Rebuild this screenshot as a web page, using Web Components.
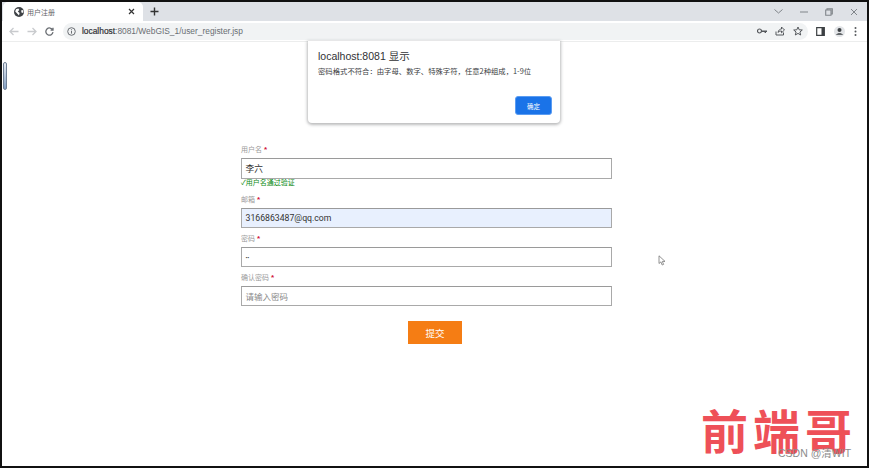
<!DOCTYPE html>
<html lang="zh"><head><meta charset="utf-8"><title>用户注册</title>
<style>
html,body{margin:0;padding:0;background:#fff}
body{font-family:"Liberation Sans","Noto Sans CJK SC",sans-serif;width:869px;height:468px;overflow:hidden}
</style></head><body>
<browser-window>
  <register-form></register-form>
</browser-window>
<script>
const CJK='"Noto Sans CJK SC",sans-serif';
const ic=(w,h,b,s)=>`<svg width="${w}" height="${h}" viewBox="${b}" fill="none" stroke="currentColor" stroke-width="1.3" aria-hidden="true">${s}</svg>`;

customElements.define('browser-tabs',class extends HTMLElement{constructor(){super();this.attachShadow({mode:'open'}).innerHTML=`<style>
:host{display:flex;height:19px;background:#dee1e6;align-items:stretch;color:#45484d}
.tab{width:140px;margin-left:1px;background:#fff;display:flex;align-items:center;box-sizing:border-box;padding:0 8px 0 11px;border-radius:5px 5px 0 0}
.t{font:7px ${CJK};color:#5f6368;margin-left:3px;flex:1}
.x{display:flex;color:#333}
.plus{display:flex;margin-left:7px;align-items:center;color:#333}
.sp{flex:1}
.ctl{display:flex;align-items:center;color:#80858a;gap:17px;padding-right:9px}
</style>
<div class="tab"><svg width="10" height="10" viewBox="0 0 10 10" aria-hidden="true"><circle cx="5" cy="5" r="5" fill="#3f4347"/><path d="M2 2.2 4.4 1.4 5.3 3 3.8 4.6 5.6 6 5 8.6 3.6 7 1.2 4.6ZM7 3.4 9.2 3 9.4 5.4 7.8 6Z" fill="#fff"/></svg><span class="t">用户注册</span><span class="x">${ic(7,7,'0 0 7 7','<path d="M1 1 6 6M6 1 1 6" stroke-width="1.2"/>')}</span></div>
<div class="plus">${ic(9,9,'0 0 9 9','<path d="M4.5 .5v8M.5 4.5h8" stroke-width="1.4"/>')}</div>
<div class="sp"></div>
<div class="ctl">${ic(9,5,'0 0 9 5','<path d="M.5.5 4.5 4 8.5.5" stroke-width="1"/>')}${ic(8,8,'0 0 8 8','<path d="M0 4h8" stroke-width="1"/>')}${ic(8,8,'0 0 8 8','<path d="M.7 2h5.3v5.3H.7zM2 2V.7h5.3V6H6" stroke-width="1.1"/>')}${ic(8,8,'0 0 8 8','<path d="M1 1 7 7M7 1 1 7" stroke-width="1"/>')}</div>`}});

customElements.define('browser-toolbar',class extends HTMLElement{constructor(){super();this.attachShadow({mode:'open'}).innerHTML=`<style>
:host{display:flex;height:21px;background:#fff;align-items:center;box-sizing:border-box;border-bottom:1px solid #eceded;color:#6a6e73}
.nav{display:flex;align-items:center;gap:8px;padding-left:7px;width:54px;box-sizing:border-box}
.off{color:#c9cbce}
.omni{flex:1;height:17px;background:#f1f3f4;border-radius:9px;margin-left:7px;display:flex;align-items:center;padding:0 5px 0 4px;box-sizing:border-box}
.u{font:8.4px "Liberation Sans",sans-serif;color:#6a6e73;margin-left:6px;flex:1}
.u b{color:#303134;font-weight:400;-webkit-text-stroke:.2px #303134}
.r{display:flex;align-items:center;gap:8px;color:#55585c}
.ext{display:flex;align-items:center;gap:9px;padding:0 10px 0 8px}
</style>
<div class="nav"><span class="off" style="display:flex">${ic(10,9,'0 0 10 9','<path d="M9.5 4.5H1M4.5 1 1 4.5 4.5 8"/>')}</span><span class="off" style="display:flex">${ic(10,9,'0 0 10 9','<path d="M.5 4.5H9M5.5 1 9 4.5 5.5 8"/>')}</span><span style="display:flex">${ic(9,9,'0 0 9 9','<path d="M7.7 3A3.6 3.6 0 1 0 8 5.2M8 .8V3.2H5.6"/>')}</span></div>
<div class="omni">${ic(9,9,'0 0 9 9','<circle cx="4.5" cy="4.5" r="3.8" stroke-width="1"/><path d="M4.5 4v2.6M4.5 2.3v1" stroke-width="1"/>')}<span class="u"><b>localhost</b>:8081/WebGIS_1/user_register.jsp</span>
<div class="r"><svg width="10" height="6" viewBox="0 0 10 6" aria-hidden="true"><circle cx="2.5" cy="3" r="2" fill="none" stroke="#55585c" stroke-width="1.2"/><path d="M4 2.5h6V4H9v1H7.6V4H4z" fill="#55585c"/></svg>${ic(10,10,'0 0 10 10','<path d="M1 5.5V9h7.5V6.5M3 6.5C3.5 4 5 3 6.5 3V1L9.5 4 6.5 6.8V5C5 5 3.8 5.5 3 6.5Z" stroke-width="1"/>')}${ic(10,10,'0 0 10 10','<path d="M5 1 6.2 3.8 9.3 4 6.9 6 7.7 9 5 7.4 2.3 9 3.1 6 .7 4 3.8 3.8Z" stroke-width="1"/>')}</div></div>
<div class="ext">${ic(9,9,'0 0 9 9','<path d="M.7.7h7.6v7.6H.7z" stroke="#3c4043" stroke-width="1.2"/><path d="M5.5.7h2.8v7.6H5.5z" fill="#3c4043" stroke="none"/>')}<svg width="11" height="11" viewBox="0 0 11 11" aria-hidden="true"><circle cx="5.5" cy="5.5" r="5.5" fill="#e3e5e8"/><circle cx="5.5" cy="4" r="2" fill="#3c4043"/><path d="M1.8 8.8C3 6.6 8 6.6 9.2 8.8Z" fill="#3c4043"/></svg><svg width="3" height="9" viewBox="0 0 3 9" aria-hidden="true"><g fill="#55585c"><circle cx="1.5" cy="1" r="1"/><circle cx="1.5" cy="4.5" r="1"/><circle cx="1.5" cy="8" r="1"/></g></svg></div>`}});

customElements.define('alert-dialog',class extends HTMLElement{constructor(){super();this.attachShadow({mode:'open'}).innerHTML=`<style>
:host{position:absolute;left:308px;top:41px;width:252px;height:82px;background:#fff;border-radius:0 0 4px 4px;box-shadow:0 1px 3px 1px rgba(60,64,67,.35);box-sizing:border-box;padding:8px 8px 8px 10px;display:flex;flex-direction:column}
.h{font:10.5px "Liberation Sans","Noto Sans CJK SC",sans-serif;color:#303134;line-height:14px}
.m{font:7.35px ${CJK};color:#3c4043;line-height:11px;margin-top:2px;white-space:nowrap}
.f{margin-top:auto;display:flex;justify-content:flex-end}
button{width:37px;height:19px;background:#1a73e8;border:1.5px solid #5a9cf2;border-radius:3px;color:#fff;font:6.5px ${CJK};padding:0;box-sizing:border-box}
</style><div class="h">localhost:8081 显示</div><div class="m">密码格式不符合：由字母、数字、特殊字符，任意2种组成，1-9位</div><div class="f"><button>确定</button></div>`}});

customElements.define('form-field',class extends HTMLElement{constructor(){super();
const g=n=>this.getAttribute(n);
const fill=g('fill')!==null;const val=g('value')||'';const ph=g('placeholder');
this.attachShadow({mode:'open'}).innerHTML=`<style>
:host{display:block}
.l{font:7px/9px ${CJK};color:#9a9a9a;height:9px;display:flex;gap:2px}
.l i{color:#d0103a;font:bold 8px/10px "Liberation Sans",sans-serif}
.b{height:var(--h,20px);margin-top:4px;box-sizing:border-box;border:1px solid #a9a9a9;border-top-color:#9a9a9a;display:flex;align-items:center;padding:0 3.5px;font:8.7px Roboto,${CJK};color:#333;background:${fill?'#e8f0fe':'#fff'}}
.p{color:#8a8a8a;font-size:8.5px}
.d{font-size:6px;letter-spacing:-.3px}
</style><div class="l"><span>${g('label')}</span><i>*</i></div><div class="b">${ph?`<span class="p">${ph}</span>`:(g('dots')!==null?`<span class="d">${val}</span>`:val)}</div><slot></slot>`}});

customElements.define('register-form',class extends HTMLElement{constructor(){super();this.attachShadow({mode:'open'}).innerHTML=`<style>
:host{display:flex;flex-direction:column;width:371px;margin-left:239px;padding-top:103px}
.ok{font:7px/9px ${CJK};color:#0a8a12;height:9px;display:block;margin-top:-1px}
form-field{margin-bottom:6px}
.u{--h:21px;margin-bottom:8px}
.c{margin-bottom:15px}
button{align-self:center;width:54px;height:23px;background:#f57d14;border:0;color:#fff;font:9.5px ${CJK};padding:0;margin-left:17px}
</style>
<form-field class="u" label="用户名" value="李六"><span class="ok">✓用户名通过验证</span></form-field>
<form-field class="e" label="邮箱" value="3166863487@qq.com" fill></form-field>
<form-field class="pw" label="密码" value="••" dots></form-field>
<form-field class="c" label="确认密码" placeholder="请输入密码"></form-field>
<button>提交</button>`}});

customElements.define('browser-window',class extends HTMLElement{constructor(){super();this.attachShadow({mode:'open'}).innerHTML=`<style>
:host{display:flex;flex-direction:column;position:relative;width:869px;height:468px;box-sizing:border-box;border:2px solid #111;background:#fff;overflow:hidden}
.sb{position:absolute;left:1px;top:60px;width:4px;height:28px;border-radius:2px;border:1px solid #6f7f95;box-sizing:border-box;background:linear-gradient(#e8ecf2,#7f9cc0)}
.cur{position:absolute;left:656px;top:253px;display:flex}
.wm{position:absolute;left:699px;top:398px;font:700 47px/58px ${CJK};color:#ee5058;white-space:nowrap;display:flex;gap:5px}
.cs{position:absolute;left:776px;top:444px;font:10.5px/14px "Liberation Sans",${CJK};color:#8b8b8b;white-space:nowrap}
</style>
<browser-tabs></browser-tabs><browser-toolbar></browser-toolbar><slot></slot>
<alert-dialog style="margin:-2px"></alert-dialog>
<div class="sb"></div>
<div class="cur"><svg width="8" height="11" viewBox="0 0 8 11" aria-hidden="true"><path d="M1 .8V8.5L2.9 6.9 4.2 10 5.6 9.4 4.3 6.4H7Z" fill="#fff" stroke="#777" stroke-width=".8"/></svg></div>
<div class="wm"><span>前</span><span>端</span><span>哥</span></div>
<div class="cs">CSDN @清WIT</div>`}});
</script>
</body></html>
